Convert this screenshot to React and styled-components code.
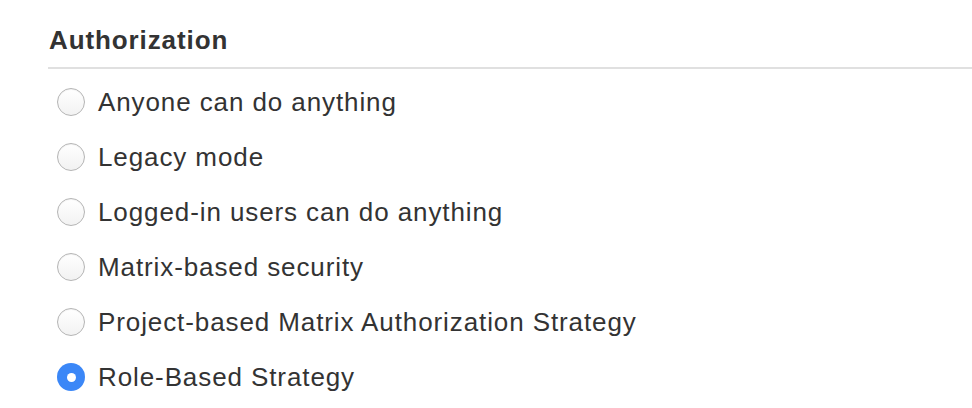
import React from "react";
import styled, { createGlobalStyle } from "styled-components";

const Global = createGlobalStyle`
  body {
    margin: 0;
    background: #fff;
    font-family: "Liberation Sans", Arial, sans-serif;
    color: #333;
  }
`;

const options = [
  "Anyone can do anything",
  "Legacy mode",
  "Logged-in users can do anything",
  "Matrix-based security",
  "Project-based Matrix Authorization Strategy",
  "Role-Based Strategy",
];

const App = () => (
  <>
    <Global />
    <Section>
      <Heading>Authorization</Heading>
      <List>
        {options.map((label, i) => (
          <Row key={label}>
            <Radio checked={i === options.length - 1} />
            <Label>{label}</Label>
          </Row>
        ))}
      </List>
    </Section>
  </>
);

export default App;

const Section = styled.div`
  padding: 26px 0 0 48px;
`;

const Heading = styled.h2`
  margin: 0;
  padding: 0 0 12px 1px;
  font-size: 26px;
  letter-spacing: 0.9px;
  font-weight: bold;
  line-height: 29px;
  color: #333;
  border-bottom: 2px solid #e0e0e0;
`;

const List = styled.div`
  display: flex;
  flex-direction: column;
  gap: 27px;
  padding: 19px 0 0 9px;
`;

const Row = styled.label`
  display: flex;
  align-items: center;
  gap: 13px;
  height: 28px;
`;

const Radio = styled.span`
  box-sizing: border-box;
  width: 28px;
  height: 28px;
  border-radius: 50%;
  flex-shrink: 0;
  position: relative;
  background: ${p => (p.checked ? "#3b87f7" : "linear-gradient(#ffffff, #f2f2f2)")};
  border: ${p => (p.checked ? "none" : "1px solid #b5b5b5")};
  box-shadow: ${p => (p.checked ? "none" : "inset 0 1px 1px rgba(0,0,0,0.05)")};

  &::after {
    content: "";
    display: ${p => (p.checked ? "block" : "none")};
    position: absolute;
    left: 50%;
    top: 50%;
    width: 9px;
    height: 9px;
    margin: -4.5px 0 0 -4.5px;
    border-radius: 50%;
    background: #fff;
  }
`;

const Label = styled.span`
  font-size: 26px;
  letter-spacing: 0.9px;
  line-height: 28px;
  color: #333;
`;
